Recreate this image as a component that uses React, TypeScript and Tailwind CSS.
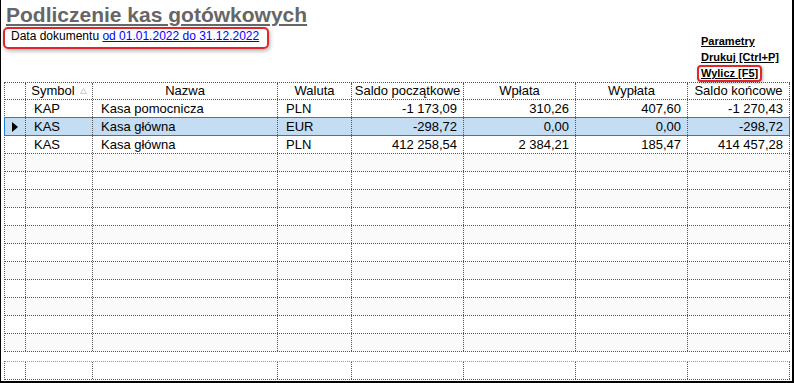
type Col = {
  key: string;
  label: string;
  width: string;
  align: 'left' | 'right' | 'center';
};

const columns: Col[] = [
  { key: 'ind', label: '', width: 'w-[21px]', align: 'center' },
  { key: 'symbol', label: 'Symbol', width: 'w-[67px]', align: 'left' },
  { key: 'nazwa', label: 'Nazwa', width: 'w-[185px]', align: 'left' },
  { key: 'waluta', label: 'Waluta', width: 'w-[74px]', align: 'left' },
  { key: 'saldoPocz', label: 'Saldo początkowe', width: 'w-[112px]', align: 'right' },
  { key: 'wplata', label: 'Wpłata', width: 'w-[112px]', align: 'right' },
  { key: 'wyplata', label: 'Wypłata', width: 'w-[112px]', align: 'right' },
  { key: 'saldoKon', label: 'Saldo końcowe', width: 'w-[102px]', align: 'right' },
];

type Kasa = Record<string, string>;

const kasy: Kasa[] = [
  { symbol: 'KAP', nazwa: 'Kasa pomocnicza', waluta: 'PLN', saldoPocz: '-1 173,09', wplata: '310,26', wyplata: '407,60', saldoKon: '-1 270,43' },
  { symbol: 'KAS', nazwa: 'Kasa główna', waluta: 'EUR', saldoPocz: '-298,72', wplata: '0,00', wyplata: '0,00', saldoKon: '-298,72' },
  { symbol: 'KAS', nazwa: 'Kasa główna', waluta: 'PLN', saldoPocz: '412 258,54', wplata: '2 384,21', wyplata: '185,47', saldoKon: '414 457,28' },
];

const ROW_COUNT = 14;
const SELECTED = 1;

function SortArrow() {
  return (
    <svg width="7" height="6" viewBox="0 0 7 6" className="shrink-0">
      <path d="M3.5 0.5 L6.5 5.5 L0.5 5.5 Z" fill="#fff" stroke="#c8c8c8" strokeWidth="1" />
    </svg>
  );
}

function RowMarker() {
  return (
    <svg width="6" height="10" viewBox="0 0 6 10">
      <path d="M0 0 L6 5 L0 10 Z" fill="#000" />
    </svg>
  );
}

function HeaderRow() {
  return (
    <div className="flex h-[18px] border-y border-dotted border-[#555]">
      {columns.map((c) => (
        <div
          key={c.key}
          className={`${c.width} shrink-0 flex items-center justify-center gap-[5px] border-r border-dotted border-[#555] leading-[16px]`}
        >
          {c.label}
          {c.key === 'symbol' && <SortArrow />}
        </div>
      ))}
    </div>
  );
}

function DataRow({ index, kasa }: { index: number; kasa?: Kasa }) {
  const selected = index === SELECTED;
  const striped = !selected && index % 2 === 1;
  return (
    <div
      className={`relative flex h-[18px] border-b border-dotted border-[#555] ${
        selected ? 'bg-[#c4ddf3]' : striped ? 'bg-[#fafafa]' : 'bg-white'
      }`}
    >
      {columns.map((c) => (
        <div
          key={c.key}
          className={`${c.width} shrink-0 flex items-center overflow-hidden whitespace-nowrap border-r border-dotted border-[#555] leading-[17px] ${
            c.align === 'right' ? 'justify-end pr-[6px]' : c.align === 'center' ? 'justify-center' : 'pl-[8px]'
          }`}
        >
          {c.key === 'ind' ? selected && <RowMarker /> : kasa?.[c.key]}
        </div>
      ))}
      {selected && (
        <span className="pointer-events-none absolute -top-px -left-px right-0 -bottom-px border border-[#1f7fd8]" />
      )}
    </div>
  );
}

function SummaryRow() {
  return (
    <div className="mt-[9px] flex h-[19px] border-t border-b border-dotted border-t-[#999] border-b-[#555]">
      {columns.map((c) => (
        <div key={c.key} className={`${c.width} shrink-0 border-r border-dotted border-[#555]`} />
      ))}
    </div>
  );
}

export default function App() {
  return (
    <div className="w-[794px] h-[383px] overflow-hidden bg-white border-l border-r-2 border-b-2 border-black font-['Liberation_Sans',Arial,sans-serif] text-black">
      {/* Nagłówek raportu */}
      <div className="flex h-[82px]">
        <div className="flex-1 pl-[5px]">
          <h1 className="pt-[3px] text-[21px] leading-[24px] font-bold text-[#666] underline decoration-[#666]">
            Podliczenie kas gotówkowych
          </h1>
          <div className="-ml-[3px] h-[22px] w-[266px] rounded-[5px] border-2 border-[#e0262b] pl-[6px] text-[12px] leading-[14px] whitespace-nowrap shadow-[1px_2px_4px_rgba(0,0,0,0.3)]">
            Data dokumentu{' '}
            <a href="#" className="text-[#0000ff] underline">
              od 01.01.2022 do 31.12.2022
            </a>
          </div>
        </div>
        <div className="w-[91px] shrink-0 pt-[33px] text-[11px] font-bold leading-[16px]">
          <a href="#" className="block underline">Parametry</a>
          <a href="#" className="block underline">Drukuj [Ctrl+P]</a>
          <span className="-ml-[4px] inline-block rounded-[4px] border-2 border-[#e0262b] px-[2px] pb-[1px] leading-[12px] shadow-[1px_1px_3px_rgba(0,0,0,0.3)]">
            <a href="#" className="underline">Wylicz [F5]</a>
          </span>
        </div>
      </div>

      {/* Tabela kas */}
      <div className="ml-[3px] w-[786px] text-[13px]">
        <div className="border-l border-dotted border-[#555]">
          <HeaderRow />
          {Array.from({ length: ROW_COUNT }, (_, i) => (
            <DataRow key={i} index={i} kasa={kasy[i]} />
          ))}
        </div>
        <div className="border-l border-dotted border-[#555]">
          <SummaryRow />
        </div>
      </div>
    </div>
  );
}
